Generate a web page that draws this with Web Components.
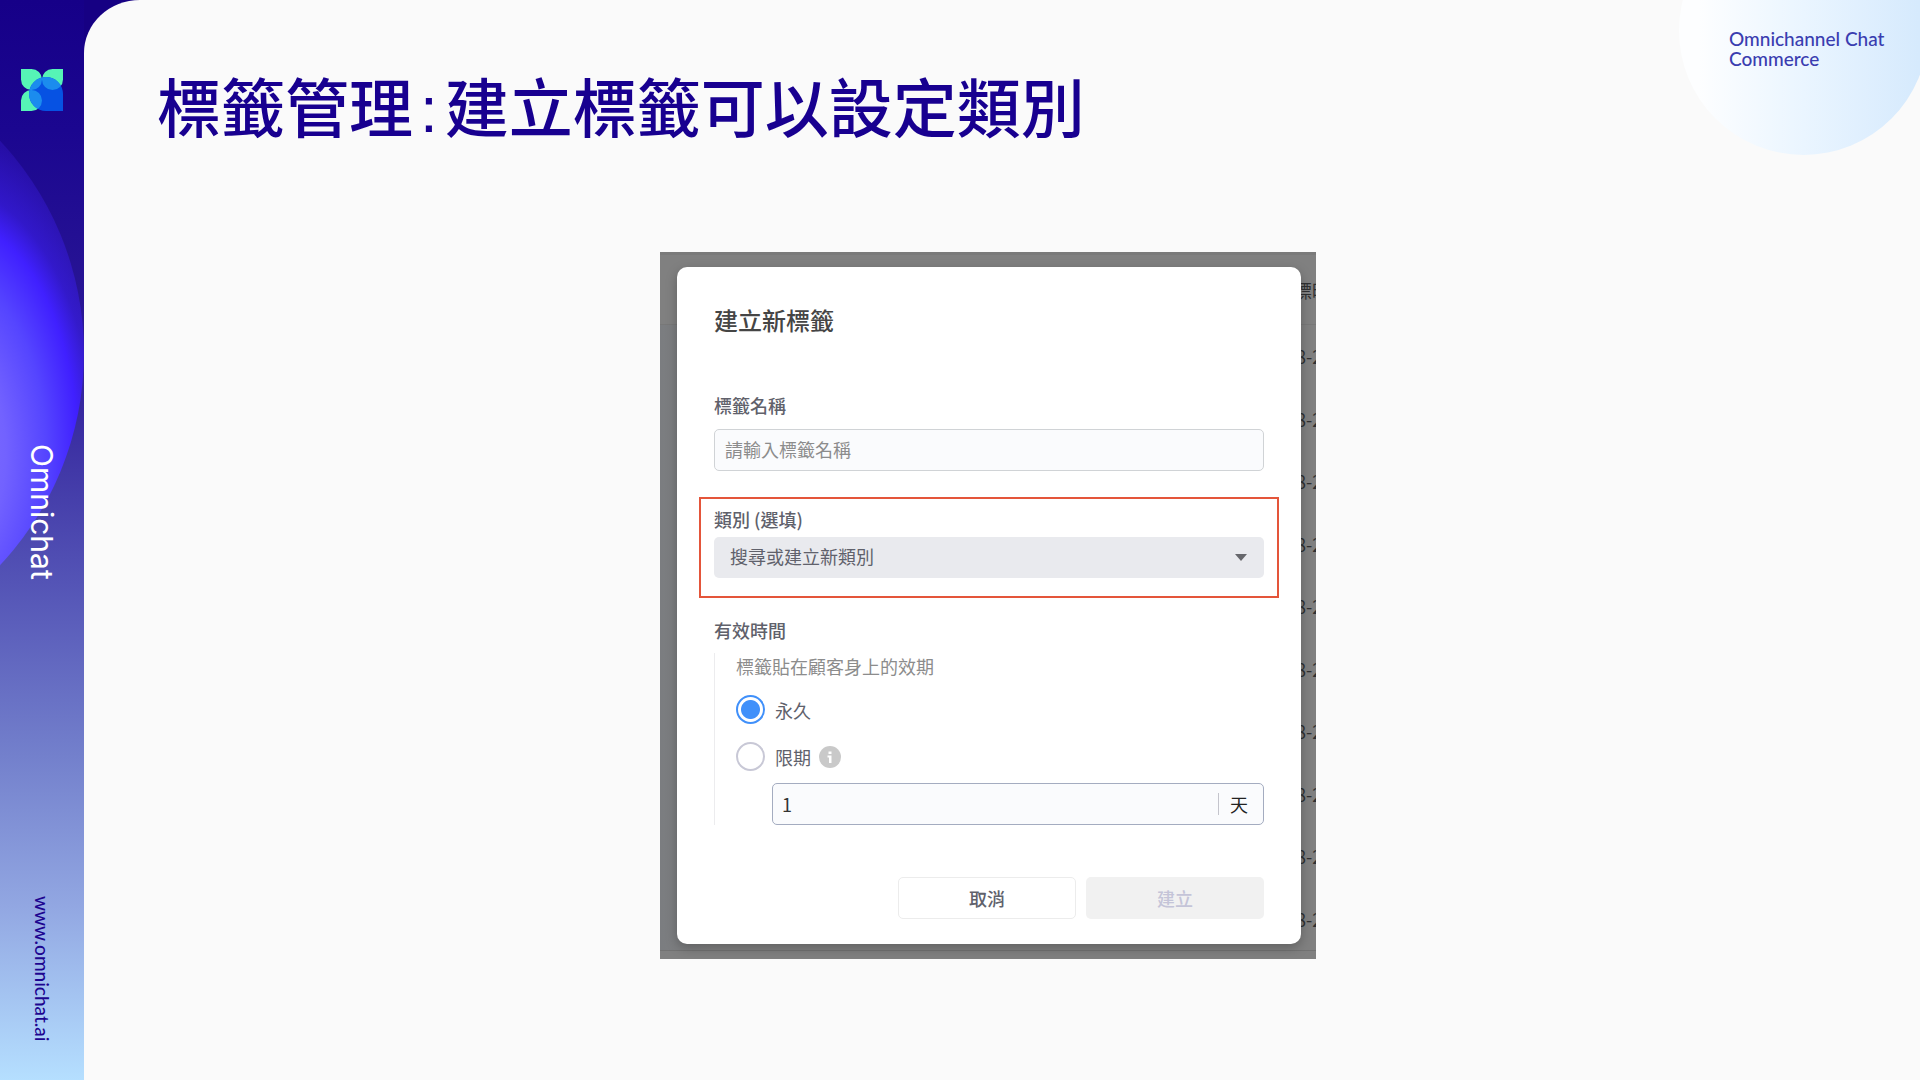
<!DOCTYPE html>
<html lang="zh-Hant">
<head>
<meta charset="utf-8">
<title>標籤管理</title>
<style>
  html, body { height: 100%; }
  body {
    margin: 0;
    background: #fafafa;
    font-family: "Noto Sans CJK TC", "Noto Sans", sans-serif;
  }
</style>
</head>
<body>
<slide-page>
  <brand-rail slot="rail"></brand-rail>
  <slide-heading slot="head">標籤管理<span class="colon">:</span>建立標籤可以設定類別</slide-heading>
  <tagline-bubble slot="head">Omnichannel Chat<br>Commerce</tagline-bubble>
  <dimmed-screen>
    <tag-dialog>
      <text-field label="標籤名稱" placeholder="請輸入標籤名稱"></text-field>
      <category-field label="類別 (選填)" value="搜尋或建立新類別"></category-field>
      <expiry-field></expiry-field>
      <dialog-actions></dialog-actions>
    </tag-dialog>
  </dimmed-screen>
</slide-page>

<script>
const define = (name, html, setup) => {
  const template = document.createElement('template');
  template.innerHTML = html;
  customElements.define(name, class extends HTMLElement {
    connectedCallback() {
      if (this.shadowRoot) return;
      const root = this.attachShadow({ mode: 'open' });
      root.append(template.content.cloneNode(true));
      if (setup) setup(this, root);
    }
  });
};

define('slide-page', `
  <style>
    :host { display: flex; min-height: 100vh; background: #160083; overflow: hidden; }
    main { flex: 1; min-width: 0; display: flex; flex-direction: column; background: #fafafa; border-top-left-radius: 56px 53px; }
    header { display: flex; justify-content: space-between; height: 252px; }
    .stage { display: flex; justify-content: center; padding-right: 28px; }
  </style>
  <slot name="rail"></slot>
  <main>
    <header><slot name="head"></slot></header>
    <div class="stage"><slot></slot></div>
  </main>
`);

define('brand-rail', `
  <style>
    :host {
      display: flex; flex-direction: column; align-items: center; box-sizing: border-box;
      flex: none; width: 84px; padding: 69px 0 39px; position: relative; overflow: hidden;
      background: linear-gradient(180deg, #160088 0%, #1b0690 12%, #281595 28%, #37299f 38%, #5454b6 54%, #7380cc 70%, #92a7e2 84%, #b5dfff 100%);
    }
    .orb {
      position: absolute; left: -536px; top: 43px; width: 620px; height: 620px; border-radius: 50%;
      background: radial-gradient(ellipse 175px 320px at 486px 410px, #8672ff 0%, #7262ff 32%, #5545ff 55%, #4020ff 73%, rgba(56, 28, 225, .7) 83%, rgba(52, 24, 200, .4) 100%);
    }
    svg { position: relative; width: 42px; height: 42px; }
    .name, a { position: relative; writing-mode: vertical-rl; white-space: nowrap; }
    .name { margin-top: 333px; color: #fff; font: 400 30px/44px Inter, sans-serif; }
    a { margin-top: auto; color: #1d0590; text-decoration: none; font: 500 19px/24px Lato, sans-serif; }
  </style>
  <div class="orb"></div>
  <svg viewBox="0 0 42 42" aria-hidden="true">
    <path fill="#56f4b6" d="M0 0H10.500A10.500 10.500 0 1 1 0 10.500ZM42 0V10.500A10.500 10.500 0 1 1 31.500 0ZM0 42V31.500A10.500 10.500 0 1 1 10.500 42Z"/>
    <path fill="#0652e3" d="M42 42H25A17 17 0 1 1 42 25Z"/>
    <clipPath id="c"><path d="M42 42H25A17 17 0 1 1 42 25Z"/></clipPath>
    <path clip-path="url(#c)" fill="#1b8cee" d="M0 0H10.500A10.500 10.500 0 1 1 0 10.500ZM42 0V10.500A10.500 10.500 0 1 1 31.500 0ZM0 42V31.500A10.500 10.500 0 1 1 10.500 42Z"/>
  </svg>
  <span class="name">Omnichat</span>
  <a href="#">www.omnichat.ai</a>
`);

define('slide-heading', `
  <style>
    :host { display: block; padding: 58px 0 0 73px; }
    h1 { margin: 0; color: #180090; font-weight: 500; font-size: 64px; line-height: 92px; white-space: nowrap; }
    ::slotted(.colon) { padding: 0 7px; font-family: "Liberation Sans", sans-serif; font-weight: 400; }
  </style>
  <h1><slot></slot></h1>
`);

define('tagline-bubble', `
  <style>
    :host { display: block; flex: none; width: 241px; height: 155px; overflow: hidden; position: relative; }
    .disc { position: absolute; left: 0; bottom: 0; width: 249px; height: 249px; border-radius: 50%; background: linear-gradient(90deg, #fdfeff 8%, #eaf5ff 50%, #d6eafd 96%); }
    p { position: relative; margin: 0; padding: 29px 0 0 50px; color: #3a3db0; font: 500 19px/20px Lato, sans-serif; white-space: nowrap; }
  </style>
  <div class="disc"></div>
  <p><slot></slot></p>
`);

define('dimmed-screen', `
  <style>
    :host { display: block; box-sizing: border-box; width: 656px; padding: 15px 15px 15px 17px; position: relative; overflow: hidden; background: #808080; }
    .behind { position: absolute; inset: 0; color: #2f3032; font-size: 18px; display: flex; flex-direction: column; padding-bottom: 8px; border-top: 3px solid #7a7a7a; }
    .behind div { height: 69px; display: flex; align-items: center; padding-left: 634px; white-space: nowrap; border-bottom: 1px solid #787878; }
    ul { flex: 1; margin: 0; padding: 0; list-style: none; display: grid; grid-auto-rows: 1fr; border-bottom: 1px solid #727272; background: linear-gradient(90deg, #7b7d80, #808080 8%); }
    li { display: flex; align-items: center; padding-left: 636px; white-space: nowrap; }
    slot { display: block; position: relative; }
  </style>
  <div class="behind" aria-hidden="true"><div>標時</div><ul></ul></div>
  <slot></slot>
`, (host, root) => {
  const list = root.querySelector('ul');
  for (let i = 0; i < 10; i++) {
    const row = document.createElement('li');
    row.textContent = '8-2';
    list.append(row);
  }
});

define('tag-dialog', `
  <style>
    :host { display: flex; flex-direction: column; box-sizing: border-box; padding: 35px 37px 25px; background: #fff; border-radius: 10px; box-shadow: 0 4px 12px rgba(0, 0, 0, .25); }
    h2 { margin: 0 0 53px; font-size: 24px; line-height: 36px; font-weight: 500; color: #454545; }
  </style>
  <h2>建立新標籤</h2>
  <slot></slot>
`);

define('text-field', `
  <style>
    :host { display: flex; flex-direction: column; gap: 10px; }
    label { font-size: 18px; line-height: 28px; font-weight: 500; color: #60616b; }
    input { box-sizing: border-box; width: 100%; height: 42px; padding: 0 10px 2px; border: 1px solid #d0d3d6; border-radius: 5px; background: #fafbfd; font: 18px "Noto Sans CJK TC", sans-serif; color: #333; }
    input::placeholder { color: #8c8c8c; opacity: 1; }
  </style>
  <label for="f"></label>
  <input id="f" type="text">
`, (host, root) => {
  root.querySelector('label').textContent = host.getAttribute('label');
  root.querySelector('input').placeholder = host.getAttribute('placeholder');
});

define('category-field', `
  <style>
    :host { display: flex; flex-direction: column; gap: 4px; margin: 26px -15px 0; padding: 6px 13px 18px; border: 2px solid #e4553a; }
    label { font-size: 18px; line-height: 28px; font-weight: 500; color: #60616b; }
    .box { display: grid; align-items: center; }
    select, svg { grid-area: 1 / 1; }
    select { appearance: none; box-sizing: border-box; width: 100%; height: 41px; padding: 0 16px 4px; border: 0; border-radius: 5px; background: #e9eaee; font: 18px "Noto Sans CJK TC", sans-serif; color: #60616b; }
    svg { justify-self: end; margin-right: 17px; width: 12px; height: 7px; pointer-events: none; }
  </style>
  <label for="f"></label>
  <div class="box">
    <select id="f"><option></option></select>
    <svg viewBox="0 0 12 7" aria-hidden="true"><path fill="#66676c" d="M0 0H12L6 7Z"/></svg>
  </div>
`, (host, root) => {
  root.querySelector('label').textContent = host.getAttribute('label');
  root.querySelector('option').textContent = host.getAttribute('value');
});

define('expiry-field', `
  <style>
    :host { display: block; margin-top: 18px; }
    fieldset { margin: 0; padding: 0; border: 0; min-width: 0; }
    legend { padding: 0; font-size: 18px; line-height: 28px; font-weight: 500; color: #60616b; }
    .body { margin-top: 9px; padding-left: 21px; border-left: 1px solid #ececee; display: flex; flex-direction: column; }
    p { margin: 0 0 7px; font-size: 18px; line-height: 26px; color: #8c8c8c; }
    .choice { display: flex; align-items: center; height: 47px; font-size: 18px; color: #60616b; }
    label { margin: 0 8px 0 10px; }
    input[type=radio] { appearance: none; box-sizing: border-box; margin: 0; width: 29px; height: 29px; border: 2px solid #c8c8d6; border-radius: 50%; background: #fff; }
    input[type=radio]:checked { border-color: #4090fa; background: radial-gradient(circle, #4090fa 9px, #fff 10px); }
    .info { width: 22px; height: 22px; }
    .days { display: flex; align-items: center; box-sizing: border-box; height: 42px; margin: 3px 0 0 36px; padding-right: 15px; border: 1px solid #a4acc0; border-radius: 5px; background: #fafbfd; }
    .days input { flex: 1; min-width: 0; padding: 0 0 0 9px; border: 0; outline: 0; background: none; font: 18px "Noto Sans CJK TC", sans-serif; color: #333; }
    .days span { padding-left: 11px; border-left: 1px solid #c4c4cc; font-size: 18px; line-height: 22px; color: #222; }
  </style>
  <fieldset>
    <legend>有效時間</legend>
    <div class="body">
      <p>標籤貼在顧客身上的效期</p>
      <div class="choice"><input type="radio" name="t" id="forever" checked><label for="forever">永久</label></div>
      <div class="choice"><input type="radio" name="t" id="limited"><label for="limited">限期</label>
        <svg class="info" viewBox="0 0 22 22" aria-hidden="true"><circle cx="11" cy="11" r="11" fill="#c9c9c9"/><path fill="#fff" d="M9.500 5.500H12.500V8H9.500ZM8.500 9.500H12.500V17H10V11.500H8.500Z"/></svg>
      </div>
      <div class="days"><input type="text" value="1" aria-label="天數"><span>天</span></div>
    </div>
  </fieldset>
`);

define('dialog-actions', `
  <style>
    :host { display: flex; justify-content: flex-end; gap: 10px; margin-top: 52px; }
    button { box-sizing: border-box; width: 178px; height: 42px; padding: 0; border-radius: 5px; font: 500 18px "Noto Sans CJK TC", sans-serif; }
    .cancel { border: 1px solid #ececec; background: #fff; color: #60616b; }
    .create { border: 0; background: #f1f1f1; color: #c4c4d8; }
  </style>
  <button class="cancel" type="button">取消</button>
  <button class="create" type="button" disabled>建立</button>
`);
</script>
</body>
</html>
